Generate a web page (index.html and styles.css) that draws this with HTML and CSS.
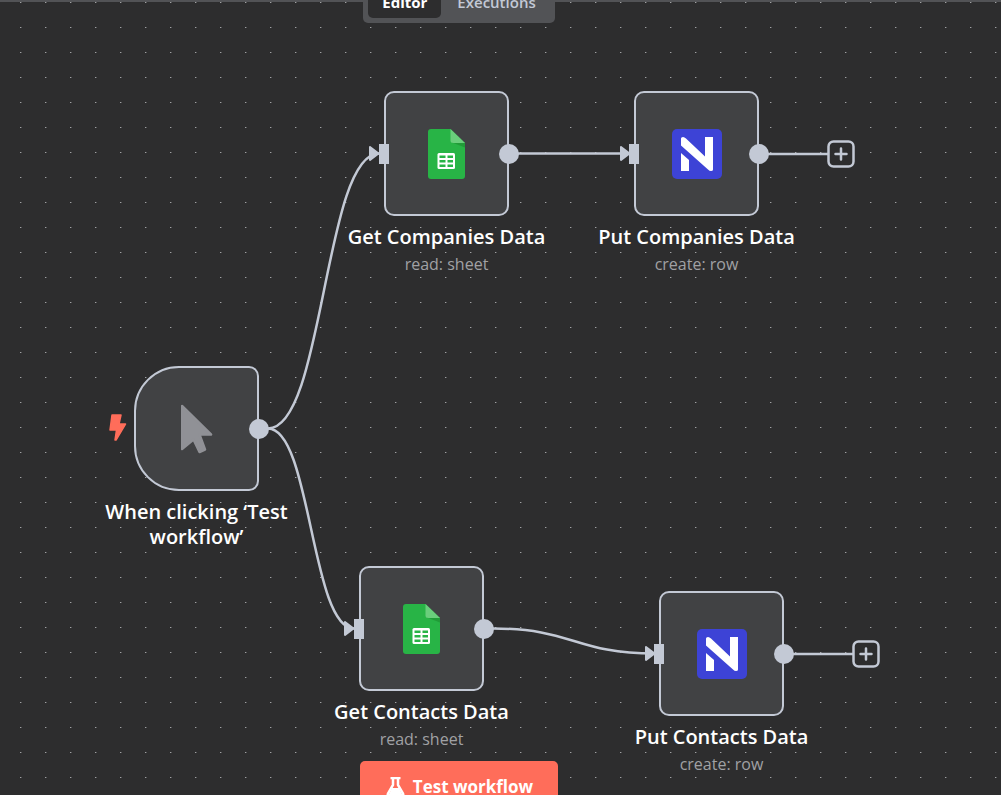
FILE: index.html
```html
<!DOCTYPE html>
<html lang="en">
<head>
<meta charset="utf-8">
<title>Workflow editor</title>
<link rel="stylesheet" href="styles.css">
</head>
<body>
<svg class="defs" aria-hidden="true">
  <defs>
    <pattern id="dots" width="25" height="25" patternUnits="userSpaceOnUse">
      <rect x="20" y="2" width="1" height="1" fill="#a0a1a3"/>
      <rect x="21" y="2" width="1" height="1" fill="#58595b"/>
    </pattern>
    <marker id="arrow" viewBox="0 0 12 16" markerWidth="12" markerHeight="16" refX="11" refY="8" orient="0" markerUnits="userSpaceOnUse">
      <path d="M2 1.500 10.500 8 2 14.500Z" fill="#c3c9d5" stroke="#c3c9d5" stroke-width="2" stroke-linejoin="round"/>
    </marker>
    <symbol id="sheets" viewBox="0 0 37 50">
      <path d="M3 0H22.500L37 14V47a3 3 0 0 1-3 3H3a3 3 0 0 1-3-3V3a3 3 0 0 1 3-3Z" fill="#28b446"/>
      <path d="M22.500 0 37 14H25a2.500 2.500 0 0 1-2.500-2.500Z" fill="#6ace7c"/>
      <path d="M24 13.500 37 18.500V14H25Z" fill="#219b38"/>
      <rect x="9.500" y="24" width="17.500" height="16" rx="1.500" fill="#fff"/>
      <path d="M11.500 26.500h6v2.500h-6zM19.500 26.500h5.500v2.500h-5.500zM11.500 31h6v2.500h-6zM19.500 31h5.500v2.500h-5.500zM11.500 35.500h6V38h-6zM19.500 35.500h5.500V38h-5.500z" fill="#28b446"/>
    </symbol>
    <symbol id="nocodb" viewBox="0 0 50 50">
      <rect width="50" height="50" rx="5" fill="#3d43d6"/>
      <path d="M9 9.500Q9 8 11 8Q12.500 8 14 9.500L33 27.500V8H41V40.500Q41 42 39 42Q37.500 42 36 40.500L9 16.500Z" fill="#fff"/>
      <path d="M9 24 17 31V42H9Z" fill="#fff"/>
    </symbol>
    <symbol id="plus" viewBox="0 0 28 28">
      <rect x="1.500" y="1.500" width="25" height="25" rx="5" fill="#2d2d2e" stroke="#c3c9d5" stroke-width="2.500"/>
      <path d="M14 8.500V19.500M8.500 14H19.500" stroke="#c3c9d5" stroke-width="2.500" stroke-linecap="round"/>
    </symbol>
  </defs>
</svg>

<main class="canvas">
  <svg class="edges" aria-hidden="true">
    <rect class="grid" width="100%" height="100%" fill="url(#dots)"/>
    <path d="M268 428.500C324 428.500 324 153.500 379 153.500" marker-end="url(#arrow)"/>
    <path d="M268 428.500C311 428.500 311 628.500 354 628.500" marker-end="url(#arrow)"/>
    <path d="M518 153.500H630" marker-end="url(#arrow)"/>
    <path d="M493 628.500C574 628.500 574 653.500 655 653.500" marker-end="url(#arrow)"/>
    <path d="M768 154H828"/>
    <path d="M793 654H853"/>
  </svg>

  <article class="node trigger at-trigger">
    <div class="box">
      <svg class="bolt" viewBox="0 0 18 28"><path d="M3 1H12L10 10H16.500L7 26H6L7.500 16H1Z" fill="#ff6d5a" stroke="#ff6d5a" stroke-width="1.500" stroke-linejoin="round"/></svg>
      <svg class="cursor" viewBox="0 0 32 50"><path d="M1 2 30 30.500H18.500L24 45.500 18.500 48 12.500 35.500 1 45Z" fill="#909196" stroke="#909196" stroke-width="2.500" stroke-linejoin="round"/></svg>
      <span class="output"></span>
    </div>
    <h2>When clicking ‘Test workflow’</h2>
  </article>

  <article class="node at-get-companies">
    <div class="box"><span class="input"></span><svg class="sheet"><use href="#sheets"/></svg><span class="output"></span></div>
    <h2>Get Companies Data</h2>
    <p>read: sheet</p>
  </article>

  <article class="node at-put-companies">
    <div class="box"><span class="input"></span><svg class="logo"><use href="#nocodb"/></svg><span class="output"></span>
      <button class="add" aria-label="Add node"><svg><use href="#plus"/></svg></button></div>
    <h2>Put Companies Data</h2>
    <p>create: row</p>
  </article>

  <article class="node at-get-contacts">
    <div class="box"><span class="input"></span><svg class="sheet"><use href="#sheets"/></svg><span class="output"></span></div>
    <h2>Get Contacts Data</h2>
    <p>read: sheet</p>
  </article>

  <article class="node at-put-contacts">
    <div class="box"><span class="input"></span><svg class="logo"><use href="#nocodb"/></svg><span class="output"></span>
      <button class="add" aria-label="Add node"><svg><use href="#plus"/></svg></button></div>
    <h2>Put Contacts Data</h2>
    <p>create: row</p>
  </article>

  <nav class="tabs-bar">
    <div class="tabs">
      <button class="tab active">Editor</button>
      <button class="tab">Executions</button>
    </div>
  </nav>

  <div class="run-bar">
    <button class="run">
      <svg viewBox="0 0 20 20"><path d="M5.500 1H15.500M8 1V8L3 16.500Q2 19 4.500 19H16.500Q19 19 18 16.500L13 8V1" fill="none" stroke="#fff" stroke-width="2.500"/><path d="M7 11H14L18 19H3Z" fill="#fff"/></svg>
      Test workflow
    </button>
  </div>
</main>
</body>
</html>
```
FILE: styles.css
```css
* { box-sizing: border-box; }

body {
  margin: 0;
  background: #2d2d2e;
  color: #fff;
  font-family: "Open Sans", "Noto Sans", sans-serif;
}

.defs { position: absolute; width: 0; height: 0; }

.canvas {
  position: relative;
  height: 100vh;
  overflow: hidden;
  box-shadow: inset 0 2px #525356;
}

.edges {
  position: absolute;
  inset: 0;
  width: 100%;
  height: 100%;
  fill: none;
  stroke: #c3c9d5;
  stroke-width: 2.5px;
}

.grid { stroke: none; }

/* Nodes on the free canvas */
.node {
  position: absolute;
  display: flex;
  flex-direction: column;
  align-items: center;
  width: 199px;
  text-align: center;
}

.at-trigger { left: 97px; top: 366px; }
.at-get-companies { left: 347px; top: 91px; }
.at-put-companies { left: 597px; top: 91px; }
.at-get-contacts { left: 322px; top: 566px; }
.at-put-contacts { left: 622px; top: 591px; }

.box {
  position: relative;
  display: flex;
  align-items: center;
  justify-content: center;
  width: 125px;
  height: 125px;
  border: 2px solid #c3c9d5;
  border-radius: 10px;
  background: #414244;
}

.trigger .box { border-radius: 45px 10px 10px 45px; }

.node h2 {
  margin: 8px 0 0;
  font-size: 20px;
  font-weight: 600;
  line-height: 25px;
}

.node p {
  margin: 4px 0 0;
  color: #a0a1a4;
  font-size: 16px;
  line-height: 22px;
}

.sheet { width: 37px; height: 50px; }
.logo { width: 50px; height: 50px; }
.cursor { width: 32px; height: 50px; }

.bolt {
  position: absolute;
  left: -27px;
  top: 46px;
  width: 18px;
  height: 28px;
}

.input,
.output {
  position: absolute;
  top: 51px;
  height: 20px;
  background: #c3c9d5;
}

.input { left: -7px; width: 10px; }
.output { right: -12px; width: 20px; border-radius: 50%; }

.add {
  position: absolute;
  left: 191px;
  top: 47px;
  width: 28px;
  height: 28px;
  padding: 0;
  border: 0;
  background: none;
}

.add svg { display: block; width: 28px; height: 28px; }

/* Controls over the canvas */
.tabs-bar,
.run-bar {
  position: absolute;
  left: 0;
  right: 0;
  display: flex;
  justify-content: center;
  padding-right: 83px;
}

.tabs-bar { top: -17px; }
.run-bar { top: calc(100% - 34px); }

.tabs {
  display: flex;
  gap: 2px;
  padding: 5px;
  border-radius: 5px;
  background: #525356;
}

.tab {
  height: 30px;
  padding: 0 14px 2px;
  border: 0;
  border-radius: 5px;
  background: none;
  color: #c3c9d5;
  font: 600 15px/28px "Open Sans", "Noto Sans", sans-serif;
}

.tab.active { background: #2d2d2e; color: #fff; font-weight: 700; }

.run {
  display: flex;
  align-items: center;
  gap: 8px;
  height: 52px;
  padding: 0 25px;
  border: 0;
  border-radius: 5px;
  background: #ff6d5a;
  color: #fff;
  font: 700 17px/24px "Open Sans", "Noto Sans", sans-serif;
}

.run svg { width: 20px; height: 20px; }
```
